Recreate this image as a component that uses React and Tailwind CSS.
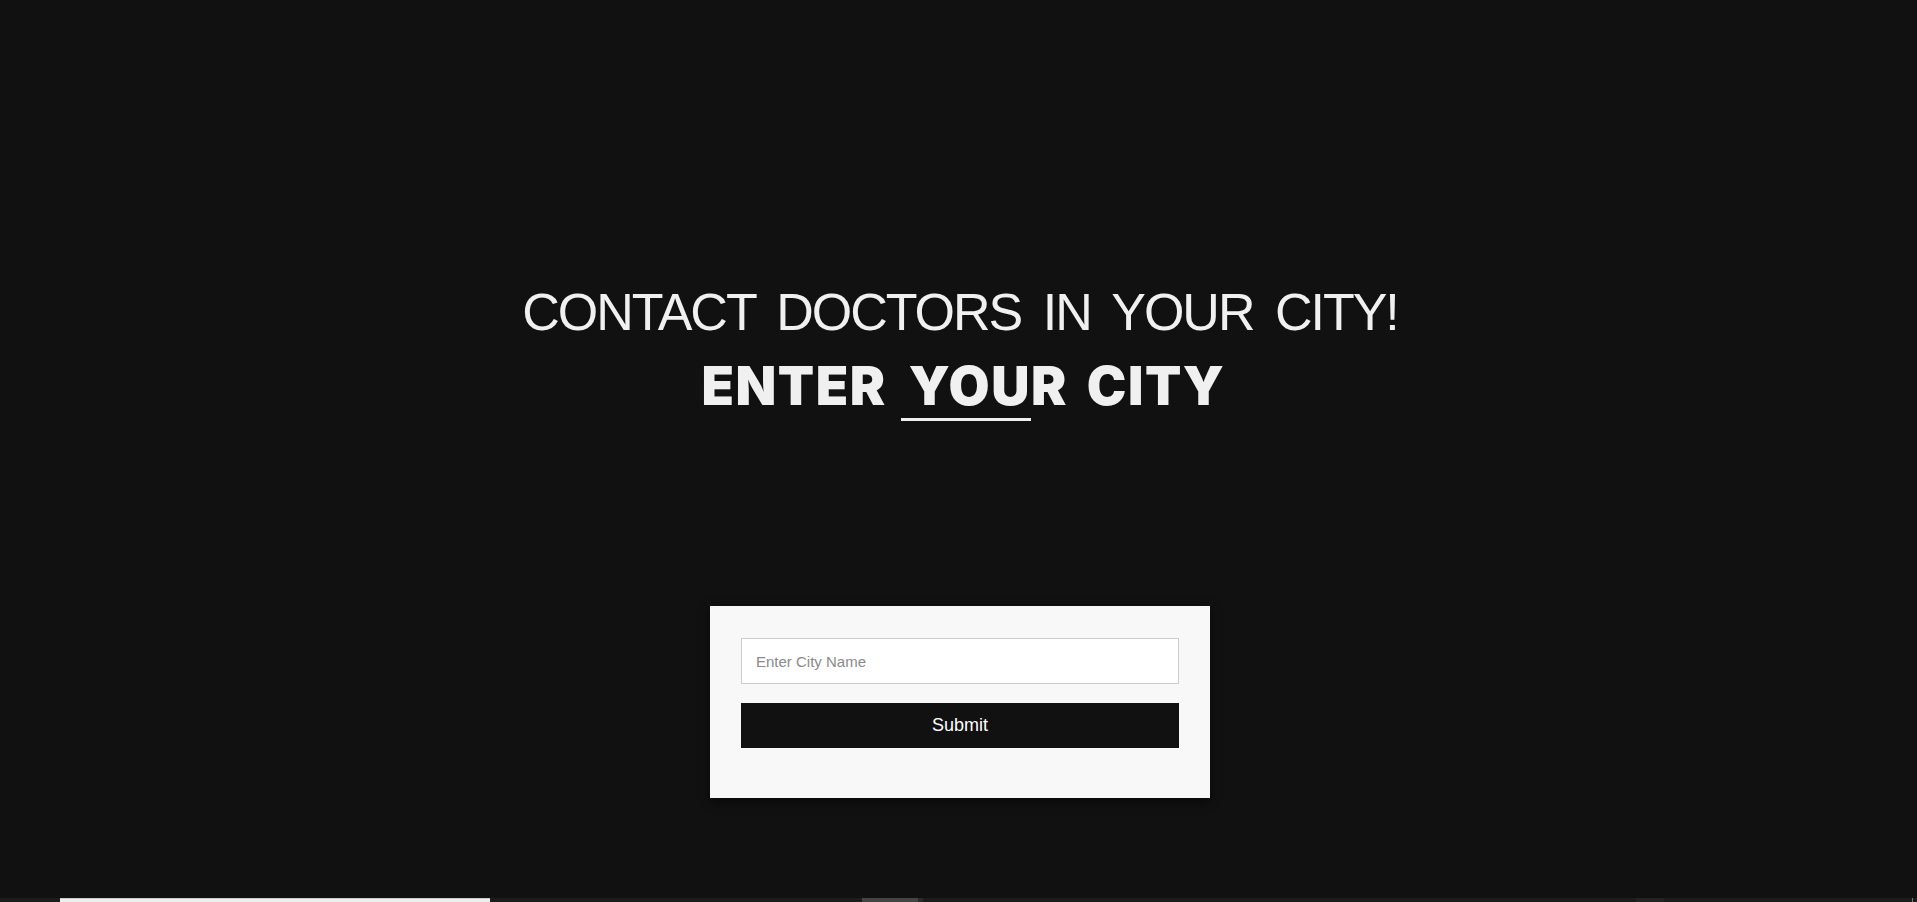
export default function App() {
  return (
    <div className="min-h-screen bg-[#111111] text-[#f0f0f0] flex flex-col [font-family:'Liberation_Sans',Arial,sans-serif]">
      <section className="h-[898px] flex flex-col items-center pt-[282px]">
        <h1 className="text-[52px] leading-[60px] font-normal tracking-[-2px] [word-spacing:9px] text-center pl-[3px]">
          CONTACT DOCTORS IN YOUR CITY!
        </h1>
        <h2 className="mt-[14px] pl-[10px] text-[53px] leading-[60px] font-black tracking-[1.5px] [word-spacing:7px] text-center whitespace-nowrap [font-family:Inter,'Liberation_Sans',sans-serif]">
          ENTER
          <span className="ml-[14px] pl-[8px] border-b-[3px] border-[#f0f0f0]">YOU</span>
          R CITY
        </h2>

        <form
          className="mt-[190px] ml-[3px] w-[500px] bg-[#f8f8f8] pt-[32px] px-[31px] pb-[50px] flex flex-col gap-[19px] shadow-[0_4px_10px_rgba(0,0,0,0.5)]"
          onSubmit={(e) => e.preventDefault()}
        >
          <input
            type="text"
            placeholder="Enter City Name"
            className="h-[46px] w-full bg-white border border-[#cccccc] px-[14px] text-[15px] text-[#333] placeholder:text-[#8a8a8a] outline-none"
          />
          <button
            type="submit"
            className="h-[45px] w-full bg-[#111111] text-white text-[18px]"
          >
            Submit
          </button>
        </form>
      </section>

      {/* next section peeking in */}
      <div className="h-[4px] bg-[#1c1c1c] flex">
        <div className="ml-[60px] w-[430px] bg-[#eeeeee] border-t border-[#cccccc]" />
        <div className="ml-[372px] w-[56px] bg-[#444444]" />
        <div className="w-[5px] bg-[#2a2a2a]" />
        <div className="ml-[713px] w-[28px] bg-[#232323]" />
        <div className="ml-auto mr-[4px] w-[1px] bg-[#777777]" />
      </div>
    </div>
  );
}
